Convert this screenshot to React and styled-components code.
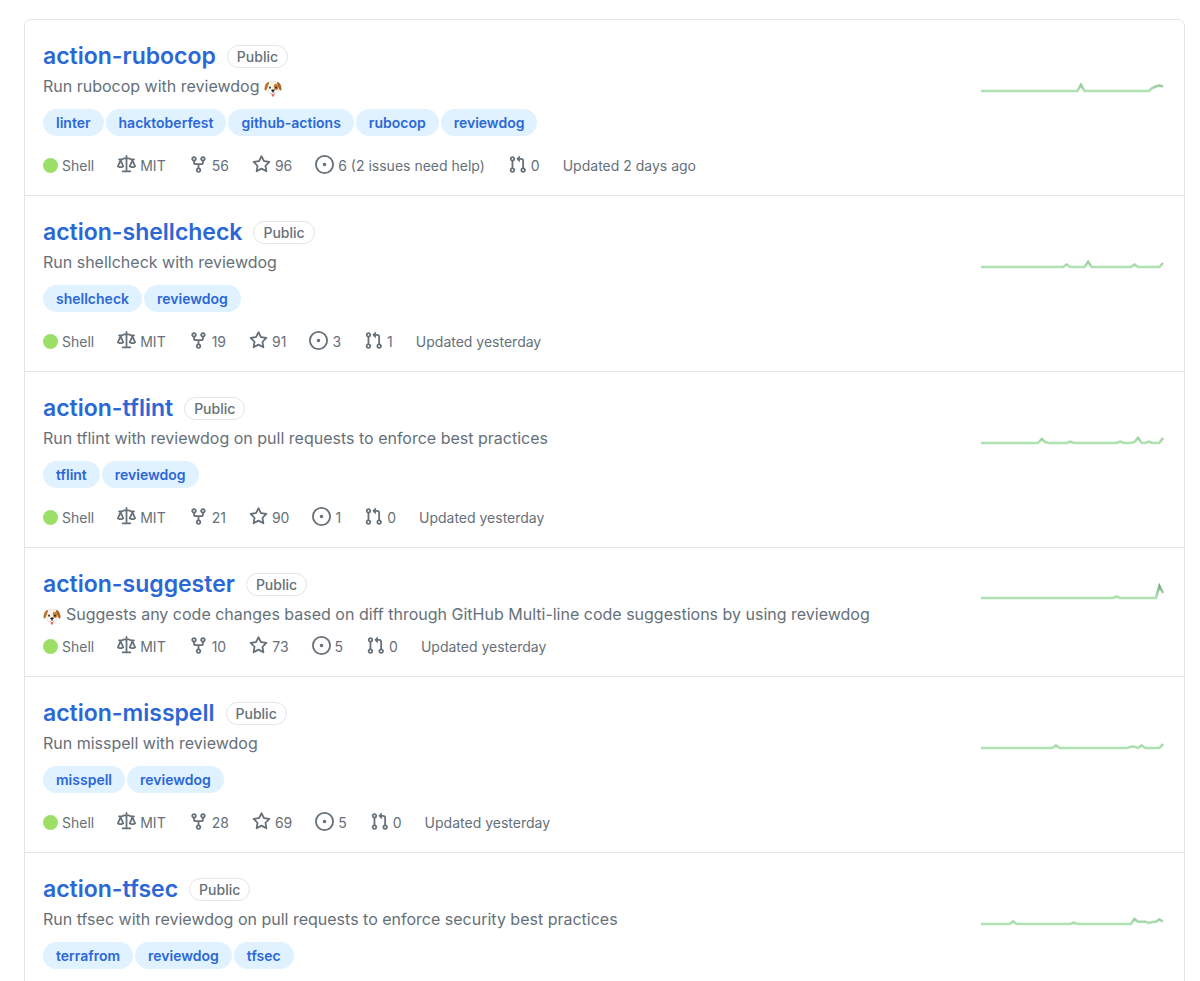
import React from 'react';
import styled, { createGlobalStyle } from 'styled-components';

const GlobalStyle = createGlobalStyle`
    * {
        box-sizing: border-box;
    }

    body {
        margin: 0;
        background: #fff;
        color: #667079;
        font-family: Inter, 'Liberation Sans', sans-serif;
        font-size: 14px;
    }
`;

const Page = styled.main`
    height: 100vh;
    overflow: hidden;
    padding: 19px 15px 0 24px;
`;

const RepoList = styled.ul`
    list-style: none;
    margin: 0;
    padding: 0;
    border: 1px solid #e1e4e8;
    border-radius: 7px;
`;

const RepoRow = styled.li`
    display: flex;
    justify-content: space-between;
    min-height: ${props => props.tall ? '176px' : '0'};
    padding: 18px 21px 19px 18px;
    border-bottom: 1px solid #e1e4e8;

    &:last-child {
        border-bottom: none;
    }
`;

const RepoInfo = styled.div`
    flex: 1;
    min-width: 0;
`;

const Heading = styled.div`
    display: flex;
    align-items: center;
    gap: 11px;
    height: 36px;
`;

const Name = styled.h3`
    margin: 0;
    font-size: 23px;
    font-weight: 600;
    line-height: 36px;
`;

const NameLink = styled.a`
    color: #2c67d6;
    text-decoration: none;
`;

const Badge = styled.span`
    padding: 0 9px;
    border: 1px solid #e1e4e8;
    border-radius: 12px;
    font-size: 14px;
    font-weight: 500;
    line-height: 21px;
`;

const Description = styled.p`
    display: flex;
    align-items: center;
    gap: 5px;
    margin: 0;
    font-size: 16px;
    line-height: 25px;
`;

const Topics = styled.div`
    display: flex;
    gap: 2px;
    margin: 10px 0 19px;
`;

const Topic = styled.a`
    padding: 0 13px;
    border-radius: 14px;
    background: #e0f2ff;
    color: #2c67d6;
    font-size: 14px;
    font-weight: 600;
    line-height: 27px;
    text-decoration: none;
`;

const Meta = styled.div`
    display: flex;
    align-items: center;
    gap: 23px;
    margin-top: ${props => props.tight ? '9px' : '0'};
    font-size: 14px;
    line-height: 21px;
`;

const MetaItem = styled.span`
    display: inline-flex;
    align-items: center;
    gap: 4px;
    color: inherit;
    text-decoration: none;
`;

const LanguageDot = styled.span`
    width: 15px;
    height: 15px;
    border-radius: 50%;
    background: #9bdf66;
`;

const Octicon = styled.svg`
    width: 19px;
    height: 19px;
    fill: currentColor;
    margin-bottom: 2px;
`;

const Graph = styled.svg`
    flex: none;
    align-self: center;
    width: 182px;
    height: 36px;
    margin-bottom: 37px;
    overflow: visible;
`;

const Emoji = styled.svg`
    width: 18px;
    height: 17px;
    flex: none;
    margin-top: 3px;
`;

const ICONS = {
    law: 'M8.75.75a.75.75 0 00-1.5 0V2h-.984c-.305 0-.604.08-.869.23l-1.288.737A.25.25 0 013.984 3H1.75a.75.75 0 000 1.5h.428L.066 9.192a.75.75 0 00.154.838l.53-.53-.53.53v.001l.002.002.002.002.006.006.016.015.045.04a3.514 3.514 0 00.686.45A4.492 4.492 0 003 11c.88 0 1.556-.22 2.023-.454a3.515 3.515 0 00.686-.45l.045-.04.016-.015.006-.006.002-.002.001-.002L5.25 9.5l.53.53a.75.75 0 00.154-.838L3.822 4.5h.162c.305 0 .604-.08.869-.23l1.289-.737a.25.25 0 01.124-.033h.984V13h-2.5a.75.75 0 000 1.5h6.5a.75.75 0 000-1.5h-2.5V3.5h.984a.25.25 0 01.124.033l1.29.736c.264.152.563.231.868.231h.162l-2.112 4.692a.75.75 0 00.154.838l.53-.53-.53.53v.001l.002.002.002.002.006.006.016.015.045.04a3.517 3.517 0 00.686.45A4.492 4.492 0 0013 11c.88 0 1.556-.22 2.023-.454a3.512 3.512 0 00.686-.45l.045-.04.01-.01.006-.005.006-.006.002-.002.001-.002-.529-.531.53.53a.75.75 0 00.154-.838L13.823 4.5h.427a.75.75 0 000-1.5h-2.234a.25.25 0 01-.124-.033l-1.29-.736A1.75 1.75 0 009.735 2H8.75V.75zM1.695 9.227c.285.135.718.273 1.305.273s1.02-.138 1.305-.273L3 6.327l-1.305 2.9zm10 0c.285.135.718.273 1.305.273s1.02-.138 1.305-.273L13 6.327l-1.305 2.9z',
    fork: 'M5 3.25a.75.75 0 11-1.5 0 .75.75 0 011.5 0zm0 2.122a2.25 2.25 0 10-1.5 0v.878A2.25 2.25 0 005.75 8.5h1.5v2.128a2.251 2.251 0 101.5 0V8.5h1.5a2.25 2.25 0 002.25-2.25v-.878a2.25 2.25 0 10-1.5 0v.878a.75.75 0 01-.75.75h-4.5A.75.75 0 015 6.25v-.878zm3.75 7.378a.75.75 0 11-1.5 0 .75.75 0 011.5 0zm3-8.75a.75.75 0 100-1.5.75.75 0 000 1.5z',
    star: 'M8 .25a.75.75 0 01.673.418l1.882 3.815 4.21.612a.75.75 0 01.416 1.279l-3.046 2.97.719 4.192a.75.75 0 01-1.088.791L8 12.347l-3.766 1.98a.75.75 0 01-1.088-.79l.72-4.194L.818 6.374a.75.75 0 01.416-1.28l4.21-.611L7.327.668A.75.75 0 018 .25zm0 2.445L6.615 5.5a.75.75 0 01-.564.41l-3.097.45 2.24 2.184a.75.75 0 01.216.664l-.528 3.084 2.769-1.456a.75.75 0 01.698 0l2.77 1.456-.53-3.084a.75.75 0 01.216-.664l2.24-2.183-3.096-.45a.75.75 0 01-.564-.41L8 2.694v.001z',
    issue: 'M8 9.5a1.5 1.5 0 100-3 1.5 1.5 0 000 3zM8 0a8 8 0 100 16A8 8 0 008 0zM1.5 8a6.5 6.5 0 1113 0 6.5 6.5 0 01-13 0z',
    pull: 'M7.177 3.073L9.573.677A.25.25 0 0110 .854v4.792a.25.25 0 01-.427.177L7.177 3.427a.25.25 0 010-.354zM3.75 2.5a.75.75 0 100 1.5.75.75 0 000-1.5zm-2.25.75a2.25 2.25 0 113 2.122v5.256a2.251 2.251 0 11-1.5 0V5.372A2.25 2.25 0 011.5 3.25zM11 2.5h-1V4h1a1 1 0 011 1v5.628a2.251 2.251 0 101.5 0V5A2.5 2.5 0 0011 2.5zm1 10.25a.75.75 0 111.5 0 .75.75 0 01-1.5 0zM3.75 12a.75.75 0 100 1.5.75.75 0 000-1.5z',
};

// activity: week index -> height, every other week is flat
const REPOS = [
    {
        name: 'action-rubocop',
        desc: 'Run rubocop with reviewdog',
        dog: 'after',
        topics: ['linter', 'hacktoberfest', 'github-actions', 'rubocop', 'reviewdog'],
        stats: { forks: 56, stars: 96, issues: '6 (2 issues need help)', pulls: 0, updated: 'Updated 2 days ago' },
        activity: { 28: 6, 48: 3, 49: 4.5, 50: 5.5, 51: 4.5 },
    },
    {
        name: 'action-shellcheck',
        desc: 'Run shellcheck with reviewdog',
        topics: ['shellcheck', 'reviewdog'],
        stats: { forks: 19, stars: 91, issues: 3, pulls: 1, updated: 'Updated yesterday' },
        activity: { 24: 2.5, 30: 5, 43: 2.5, 51: 4 },
    },
    {
        name: 'action-tflint',
        desc: 'Run tflint with reviewdog on pull requests to enforce best practices',
        topics: ['tflint', 'reviewdog'],
        stats: { forks: 21, stars: 90, issues: 1, pulls: 0, updated: 'Updated yesterday' },
        activity: { 17: 4, 18: 1, 25: 1.3, 39: 1.3, 43: 1, 44: 5, 47: 1.3, 51: 5 },
    },
    {
        name: 'action-suggester',
        desc: 'Suggests any code changes based on diff through GitHub Multi-line code suggestions by using reviewdog',
        dog: 'before',
        topics: [],
        stats: { forks: 10, stars: 73, issues: 5, pulls: 0, updated: 'Updated yesterday' },
        base: 23,
        activity: { 38: 1.3, 50: 12, 51: 5 },
    },
    {
        name: 'action-misspell',
        desc: 'Run misspell with reviewdog',
        topics: ['misspell', 'reviewdog'],
        stats: { forks: 28, stars: 69, issues: 5, pulls: 0, updated: 'Updated yesterday' },
        activity: { 21: 2.5, 42: 1.3, 43: 1.3, 45: 2.5, 51: 4 },
    },
    {
        name: 'action-tfsec',
        desc: 'Run tfsec with reviewdog on pull requests to enforce security best practices',
        topics: ['terrafrom', 'reviewdog', 'tfsec'],
        activity: { 9: 2.5, 26: 1.3, 43: 5, 44: 2.3, 45: 2.3, 46: 2.3, 47: 1, 48: 2, 49: 2.3, 50: 4.5, 51: 2.3 },
    },
];

const WEEKS = 52;

function Icon({ name }) {
    return (
        <Octicon viewBox="0 0 16 16" aria-hidden="true">
            <path fillRule="evenodd" d={ICONS[name]} />
        </Octicon>
    );
}

function Dog() {
    return (
        <Emoji viewBox="0 0 18 17" aria-hidden="true">
            <path d="M4 3.500C5 1.600 7 1 9 1s4 .6 5 2.500c1 2 1.600 4.500 1.200 6.500-.6 2.700-3.300 4.600-6.200 4.600S3.400 12.700 2.800 10c-.4-2 .2-4.500 1.200-6.500z" fill="#f6f2ec" stroke="#d8cfc3" strokeWidth=".4" />
            <path d="M10.400 4.200c1.700-1.200 3.600-.2 4 2.600.2 1.900-.8 3.300-2.200 3.300-1.600 0-2.300-1.400-2.400-3 0-1.200.1-2.300.6-2.900z" fill="#cd8430" />
            <path d="M5 2C2.900 1.900 1.600 3.700.9 6.200c-.5 2-.7 3.400 0 4 1.100.7 2-.8 2.500-2.500C3.900 5.900 5.200 3.800 5 2z" fill="#b9752f" />
            <path d="M13 2c2.100-.1 3.400 1.700 4.100 4.200.5 2 .7 3.400 0 4-1.100.7-2-.8-2.500-2.500C14.100 5.900 12.800 3.800 13 2z" fill="#a9652a" />
            <ellipse cx="6" cy="7.600" rx=".9" ry="1.200" fill="#2f2826" />
            <ellipse cx="12" cy="7.600" rx=".9" ry="1.200" fill="#2f2826" />
            <path d="M7.800 13.500h2.400v1.900a1.200 1.200 0 01-2.400 0z" fill="#ed6576" />
            <ellipse cx="9" cy="12" rx="3.400" ry="2.100" fill="#fff" />
            <path d="M7.300 10c.4-.6 3-.6 3.400 0 .3.700-.9 1.900-1.700 1.900S7 10.700 7.300 10z" fill="#27211f" />
            <path d="M9 11.700v.6c-.6 1-1.600 1.100-2.300.6M9 12.300c.6 1 1.600 1.100 2.300.6" fill="none" stroke="#52423c" strokeWidth=".5" />
        </Emoji>
    );
}

function Sparkline({ id, activity, base = 20 }) {
    const points = Array.from({ length: WEEKS }, (_, i) => (
        `${(i * 182 / (WEEKS - 1)).toFixed(1)},${base - (activity[i] || 0)}`
    )).join(' ');

    return (
        <Graph viewBox="0 0 182 36" aria-hidden="true">
            <defs>
                <linearGradient id={id} gradientUnits="userSpaceOnUse" x1="0" y1={base} x2="0" y2={base - 14}>
                    <stop offset="0" stopColor="#b0e3b1" />
                    <stop offset="1" stopColor="#72aa7b" />
                </linearGradient>
            </defs>
            <polyline points={points} fill="none" stroke={`url(#${id})`} strokeWidth="2.5" />
        </Graph>
    );
}

function Stats({ stats, tight }) {
    return (
        <Meta tight={tight || undefined}>
            <MetaItem><LanguageDot />Shell</MetaItem>
            <MetaItem><Icon name="law" />MIT</MetaItem>
            <MetaItem as="a" href="#forks"><Icon name="fork" />{stats.forks}</MetaItem>
            <MetaItem as="a" href="#stars"><Icon name="star" />{stats.stars}</MetaItem>
            <MetaItem as="a" href="#issues"><Icon name="issue" />{stats.issues}</MetaItem>
            <MetaItem as="a" href="#pulls"><Icon name="pull" />{stats.pulls}</MetaItem>
            <span>{stats.updated}</span>
        </Meta>
    );
}

function Repo({ repo }) {
    const hasTopics = repo.topics.length > 0;

    return (
        <RepoRow tall={hasTopics || undefined}>
            <RepoInfo>
                <Heading>
                    <Name><NameLink href={`#${repo.name}`}>{repo.name}</NameLink></Name>
                    <Badge>Public</Badge>
                </Heading>
                <Description>
                    {repo.dog === 'before' && <Dog />}
                    {repo.desc}
                    {repo.dog === 'after' && <Dog />}
                </Description>
                {hasTopics && (
                    <Topics>
                        {repo.topics.map(topic => (
                            <Topic key={topic} href={`#${topic}`}>{topic}</Topic>
                        ))}
                    </Topics>
                )}
                {repo.stats && <Stats stats={repo.stats} tight={!hasTopics} />}
            </RepoInfo>
            <Sparkline id={`graph-${repo.name}`} activity={repo.activity} base={repo.base} />
        </RepoRow>
    );
}

export default function App() {
    return (
        <>
            <GlobalStyle />
            <Page>
                <RepoList>
                    {REPOS.map(repo => <Repo key={repo.name} repo={repo} />)}
                </RepoList>
            </Page>
        </>
    );
}
